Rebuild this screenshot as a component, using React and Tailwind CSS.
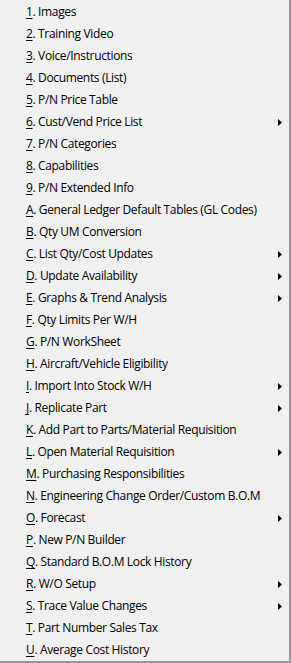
const items = [
  ['1', '. Images'],
  ['2', '. Training Video'],
  ['3', '. Voice/Instructions'],
  ['4', '. Documents (List)'],
  ['5', '. P/N Price Table'],
  ['6', '. Cust/Vend Price List', true],
  ['7', '. P/N Categories'],
  ['8', '. Capabilities'],
  ['9', '. P/N Extended Info'],
  ['A', '. General Ledger Default Tables (GL Codes)'],
  ['B', '. Qty UM Conversion'],
  ['C', '. List Qty/Cost Updates', true],
  ['D', '. Update Availability', true],
  ['E', '. Graphs & Trend Analysis', true],
  ['F', '. Qty Limits Per W/H'],
  ['G', '. P/N WorkSheet'],
  ['H', '. Aircraft/Vehicle Eligibility'],
  ['I', '. Import Into Stock W/H', true],
  ['J', '. Replicate Part', true],
  ['K', '. Add Part to Parts/Material Requisition'],
  ['L', '. Open Material Requisition', true],
  ['M', '. Purchasing Responsibilities'],
  ['N', '. Engineering Change Order/Custom B.O.M'],
  ['O', '. Forecast', true],
  ['P', '. New P/N Builder'],
  ['Q', '. Standard B.O.M Lock History'],
  ['R', '. W/O Setup', true],
  ['S', '. Trace Value Changes', true],
  ['T', '. Part Number Sales Tax'],
  ['U', '. Average Cost History'],
];

export default function App() {
  return (
    <div
      className="w-[291px] h-[663px] bg-[#f0f0f0] border-r-2 border-b-2 border-[#979797] pt-px text-black text-[12px] tracking-[-0.35px]"
      style={{ fontFamily: '"Open Sans", "Noto Sans", sans-serif' }}
    >
      {items.map(([key, rest, sub]) => (
        <div key={key} className="h-[22px] flex items-center pl-[26px] pr-[7px]">
          <span className="flex-1 whitespace-nowrap">
            <span className="underline underline-offset-2">{key}</span>
            {rest}
          </span>
          {sub && (
            <svg width="4" height="7" viewBox="0 0 4 7" className="shrink-0">
              <path d="M0 0 L4 3.5 L0 7 Z" fill="#000" />
            </svg>
          )}
        </div>
      ))}
    </div>
  );
}
